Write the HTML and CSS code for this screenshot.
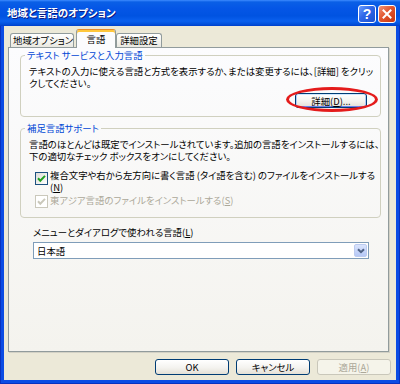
FILE: index.html
```html
<!DOCTYPE html>
<html lang="ja">
<head>
<meta charset="utf-8">
<title>地域と言語のオプション</title>
<link rel="stylesheet" href="styles.css">
</head>
<body>
<div class="window">
  <div class="titlebar">
    <span class="title">地域と言語のオプション</span>
    <div class="caption">
      <span class="cbtn help">?</span>
      <span class="cbtn close"><svg width="10" height="10" viewBox="0 0 10 10"><path d="M1.5 1.5 L8.5 8.5 M8.5 1.5 L1.5 8.5" stroke="#fff" stroke-width="2" stroke-linecap="square"/></svg></span>
    </div>
  </div>
  <div class="frame">
    <div class="client">
      <div class="tabs">
        <div class="tab t1">地域オプション</div>
        <div class="tab active t2">言語</div>
        <div class="tab t3">詳細設定</div>
      </div>
      <div class="panel">
        <fieldset class="group g1">
          <legend class="legend">テキスト サービスと入力言語</legend>
          <p class="text">テキストの入力に使える言語と方式を表示するか、または変更するには、[詳細] をクリッ<br>クしてください。</p>
          <div class="btn-row">
            <span class="ring"><button class="btn focus detail">詳細(<u>D</u>)...</button></span>
          </div>
        </fieldset>
        <fieldset class="group g2">
          <legend class="legend">補足言語サポート</legend>
          <p class="text">言語のほとんどは既定でインストールされています。追加の言語をインストールするには、<br>下の適切なチェック ボックスをオンにしてください。</p>
          <div class="check-row r1">
            <svg class="box" width="13" height="13" viewBox="0 0 13 13"><defs><linearGradient id="cg1" x1="0" y1="0" x2="1" y2="1"><stop offset="0" stop-color="#dcdcd7"/><stop offset="1" stop-color="#ffffff"/></linearGradient></defs><rect x="0.5" y="0.5" width="12" height="12" fill="url(#cg1)" stroke="#1c5180"/><path d="M3 6.3 L5.3 8.7 L10 3.9" fill="none" stroke="#21a121" stroke-width="2"/></svg>
            <span class="check-label">複合文字や右から左方向に書く言語 (タイ語を含む) のファイルをインストールする<br>(<u>N</u>)</span>
          </div>
          <div class="check-row r2 disabled">
            <svg class="box" width="13" height="13" viewBox="0 0 13 13"><rect x="0.5" y="0.5" width="12" height="12" fill="#ffffff" stroke="#cac8bb"/><path d="M3 6.3 L5.3 8.7 L10 3.9" fill="none" stroke="#cac8bb" stroke-width="2"/></svg>
            <span class="check-label">東アジア言語のファイルをインストールする(<u>S</u>)</span>
          </div>
        </fieldset>
        <div class="field-label">メニューとダイアログで使われる言語(<u>L</u>)</div>
        <div class="select">
          <span class="select-value">日本語</span>
          <span class="dd"><svg width="8" height="6" viewBox="0 0 8 6"><path d="M1 1.2 L4 4.2 L7 1.2" fill="none" stroke="#4d6185" stroke-width="2"/></svg></span>
        </div>
      </div>
      <div class="footer">
        <button class="btn fbtn">OK</button>
        <button class="btn fbtn">キャンセル</button>
        <button class="btn fbtn" disabled>適用(<u>A</u>)</button>
      </div>
    </div>
  </div>
</div>
</body>
</html>
```

FILE: styles.css
```css
* { box-sizing: border-box; }
html, body { margin: 0; padding: 0; }
body {
  width: 400px;
  height: 384px;
  overflow: hidden;
  font-family: "Noto Sans CJK JP", "Noto Sans", sans-serif;
  font-size: 9.4px;
  line-height: 12px;
  color: #000;
  font-feature-settings: "palt";
}
.window {
  width: 400px;
  height: 384px;
  display: flex;
  flex-direction: column;
}
.titlebar {
  height: 26px;
  flex: none;
  display: flex;
  align-items: center;
  justify-content: space-between;
  padding: 0 4px 0 7px;
  background: linear-gradient(#3d8bff 0, #0a5fe6 2px, #0556e6 8px, #0053e1 16px, #0a60ee 21px, #0251dc 24px, #003ecb 26px);
}
.title {
  color: #fff;
  font-weight: bold;
  font-size: 10.5px;
  line-height: 14px;
  text-shadow: 1px 1px 0 #0a1883;
  margin-top: -1px;
}
.caption { display: flex; gap: 2px; margin-top: 1px; }
.cbtn {
  width: 18px;
  height: 18px;
  border: 1px solid #fff;
  border-radius: 3px;
  display: flex;
  align-items: center;
  justify-content: center;
}
.help {
  background: linear-gradient(135deg, #6c9cff, #2e67e8 45%, #1b50d0);
  color: #fff;
  font-family: "Liberation Sans", sans-serif;
  font-weight: bold;
  font-size: 14px;
  line-height: 14px;
}
.close {
  background: linear-gradient(135deg, #f29478, #e2562f 45%, #c8360f);
}
.frame {
  flex: 1;
  display: flex;
  padding: 0 4px 4px;
  background: #0b4ce4;
  box-shadow: inset 1px 0 #0832c0, inset -1px 0 #0832c0, inset 0 -1px #0832c0;
}
.client {
  flex: 1;
  background: #ece9d8;
  display: flex;
  flex-direction: column;
}
.tabs {
  height: 21px;
  flex: none;
  display: flex;
  align-items: flex-end;
  padding-left: 6px;
}
.tab {
  height: 14px;
  border: 1px solid #919b9c;
  border-bottom: 0;
  border-radius: 3px 3px 0 0;
  background: linear-gradient(#ffffff, #f3f2ed 60%, #e9e8e1);
  text-align: center;
  line-height: 13px;
  white-space: nowrap;
}
.tab.active {
  height: 19px;
  margin-bottom: -1px;
  position: relative;
  z-index: 1;
  background: #fcfcfe;
  border-top: 1px solid #e68b2c;
  box-shadow: inset 0 2px #ffc73c;
  line-height: 15px;
  padding-top: 2px;
}
.t1 { width: 64px; margin-right: 2px; padding-left: 2px; }
.t2 { width: 40px; }
.t3 { width: 46px; }
.panel {
  flex: none;
  margin-left: 4px;
  width: 381px;
  height: 305px;
  border: 1px solid #919b9c;
  background: linear-gradient(#fcfcfe, #f4f3ee);
  box-shadow: 1px 1px 0 #d3d1c5;
  padding: 1px 7px 0 11px;
}
.group {
  margin: 0;
  min-width: 0;
  border: 1px solid #d0d0bf;
  border-radius: 4px;
  padding: 4px 13px 8px 8px;
}
.g2 { margin-top: 5px; padding-right: 8px; padding-bottom: 9px; }
.legend {
  color: #0046d5;
  padding: 0 2px;
  margin-left: -4px;
  line-height: 12px;
}
.text { margin: 0; white-space: nowrap; }
.btn-row { display: flex; justify-content: flex-end; margin-top: 4px; }
.ring { position: relative; display: inline-flex; }
.ring::after {
  content: "";
  position: absolute;
  left: -9px;
  right: -11px;
  top: -6px;
  bottom: -4px;
  border: 3px solid #e41b1b;
  border-radius: 50%;
  pointer-events: none;
}
.btn {
  font: inherit;
  font-feature-settings: "palt";
  height: 15px;
  padding: 0;
  border: 1px solid #003c74;
  border-radius: 3px;
  background: linear-gradient(#ffffff, #f4f3ef 55%, #e4e0d6);
  color: #000;
  line-height: 12px;
  text-align: center;
}
.detail { width: 72px; }
.focus {
  box-shadow: inset 0 1px #cee7ff, inset 0 -1px #6982ee, inset 1px 0 #b2cbf7, inset -1px 0 #b2cbf7;
}
.check-row { display: flex; align-items: flex-start; padding-left: 6px; }
.r1 { margin-top: 7px; }
.r2 { margin-top: 1px; }
.box { flex: none; margin-right: 2px; }
.r1 .box { margin-top: 3px; }
.r2 .box { margin-top: 1px; }
.check-label { white-space: nowrap; }
.disabled { color: #aca899; }
.field-label { margin: 8px 0 0 13px; }
.select {
  margin: 4px 0 0 13px;
  width: 336px;
  height: 17px;
  border: 1px solid #7f9db9;
  background: #fff;
  display: flex;
  align-items: center;
  justify-content: space-between;
  padding: 0 1px 0 3px;
}
.dd {
  width: 13px;
  height: 13px;
  border-radius: 2px;
  border: 1px solid #bccbf0;
  background: linear-gradient(#dae4fd, #b5c8f6);
  display: flex;
  align-items: center;
  justify-content: center;
}
.footer {
  display: flex;
  justify-content: flex-end;
  gap: 7px;
  padding-right: 5px;
  margin-top: 7px;
}
.fbtn { width: 74px; height: 16px; }
.btn:disabled {
  border-color: #c9c7ba;
  background: #f5f4ea;
  color: #aca899;
}
```
